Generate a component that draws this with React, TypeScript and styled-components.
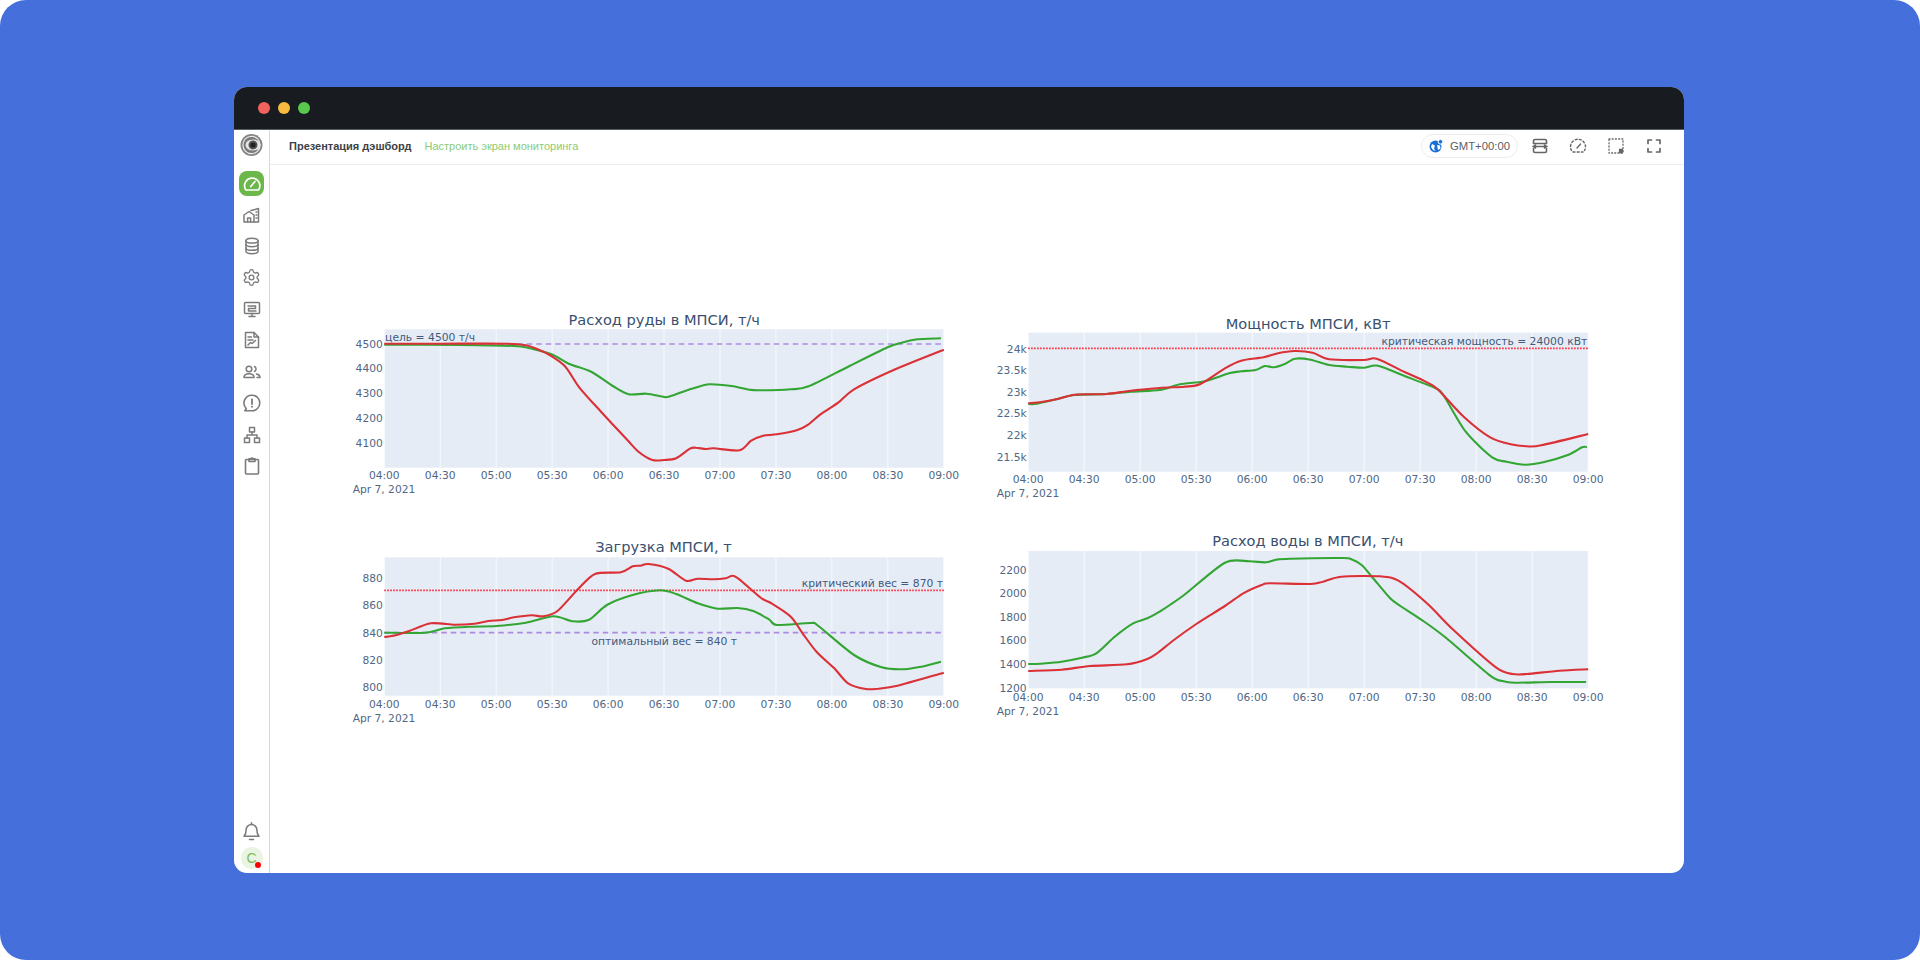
import React from 'react';
import styled, { createGlobalStyle } from 'styled-components';
import { Settings } from 'lucide-react';

const Global = createGlobalStyle`
  html, body { margin: 0; padding: 0; background: #fff; }
  #root { width: 1920px; height: 960px; overflow: hidden; }
`;

const Page = styled.div`
  width: 1920px; height: 960px; box-sizing: border-box;
  background: #4570db; border-radius: 26px;
  padding: 87px 0 0 234px;
  font-family: "Liberation Sans", Arial, sans-serif;
`;
const Window = styled.div`
  width: 1450px; height: 786px; border-radius: 13px; overflow: hidden;
  background: #fff; display: flex; flex-direction: column;
`;
const TitleBar = styled.div`
  height: 43px; flex: none; background: #181c20; display: flex; align-items: center;
  gap: 8px; padding-left: 24px; border-bottom: 1px solid #5a5d60; box-sizing: border-box;
`;
const Dot = styled.span<{ $c: string }>`
  width: 12px; height: 12px; border-radius: 50%; background: ${p => p.$c};
`;
const Body = styled.div`flex: 1; display: flex; min-height: 0;`;
const Sidebar = styled.aside`
  width: 36px; flex: none; box-sizing: border-box; border-right: 1.5px solid #d9d9d9;
  display: flex; flex-direction: column; align-items: center; padding: 3px 0 0 0;
`;
const Logo = styled.div`width: 24px; height: 24px; margin-bottom: 14px;`;
const NavList = styled.nav`display: flex; flex-direction: column; align-items: center; gap: 6.4px;`;
const NavItem = styled.div<{ $active?: boolean }>`
  width: 25px; height: 25px; border-radius: 8px; display: flex; align-items: center; justify-content: center;
  background: ${p => (p.$active ? '#6cb74a' : 'transparent')};
  color: ${p => (p.$active ? '#fff' : '#7b7b7b')};
`;
const SideBottom = styled.div`
  margin-top: auto; display: flex; flex-direction: column; align-items: center; gap: 5px; padding-bottom: 4px;
  color: #7b7b7b;
`;
const Avatar = styled.div`
  position: relative; width: 22px; height: 22px; border-radius: 50%; background: #e9f4e2;
  color: #7dbb5a; font-size: 14px; display: flex; align-items: center; justify-content: center;
`;
const RedDot = styled.span`
  position: absolute; right: 2px; bottom: 1px; width: 6px; height: 6px; border-radius: 50%; background: #f00;
`;
const Main = styled.main`flex: 1; min-width: 0; display: flex; flex-direction: column;`;
const Header = styled.header`
  height: 35px; flex: none; box-sizing: border-box; border-bottom: 1px solid #ebebeb;
  display: flex; align-items: center; padding: 0 20px 2px 19px;
`;
const Crumb = styled.span`font-size: 11px; font-weight: 700; color: #3b3f46; margin-right: 13px;`;
const Link = styled.span`font-size: 11px; color: #8ccc74;`;
const RightGroup = styled.div`margin-left: auto; display: flex; align-items: center; gap: 12px;`;
const Tools = styled.div`display: flex; align-items: center; gap: 18px; color: #666;`;
const Pill = styled.div`
  height: 24px; width: 97px; box-sizing: border-box; border: 1px solid #ececec; border-radius: 12px;
  display: flex; align-items: center; gap: 7px; padding-left: 7px;
  font-size: 11.3px; color: #5d6066;
`;
const ToolIcon = styled.div`width: 20px; height: 20px; display: flex; align-items: center; justify-content: center;`;
const Grid = styled.div`
  display: grid; grid-template-columns: 620px 640px; column-gap: 20px;
  padding: 135px 0 0 70px; align-items: start;
`;
const ChartBox = styled.svg<{ $top: number }>`
  display: block; overflow: visible; margin-top: ${p => p.$top}px;
`;
const Title = styled.text`font-family: "DejaVu Sans", sans-serif; font-size: 14.6px; fill: #3a4f6f; text-anchor: middle;`;
const Tick = styled.text`font-family: "DejaVu Sans", sans-serif; font-size: 10.7px; fill: #506784;`;
const Note = styled.text`font-family: "DejaVu Sans", sans-serif; font-size: 10.75px; fill: #445a7c;`;

type Pt = [number, number];
type Cfg = {
  w: number; h: number; s: number; top: number;
  plot: [number, number, number, number];
  title: string; titleAt: Pt;
  yTicks: [string, number][];
  xLabelY: number; dateAt: Pt;
  lines: { y: number; kind: 'dash' | 'dot' }[];
  notes: { t: string; x: number; y: number; anchor: 'start' | 'end' | 'middle' }[];
  red: Pt[]; green: Pt[];
};

const SY = 3;

const spline = (pts: Pt[], s: number) => {
  const p = pts.map(([x, y]) => [x / s, y / SY]);
  let d = `M${p[0][0].toFixed(1)} ${p[0][1].toFixed(1)}`;
  for (let i = 0; i < p.length - 1; i++) {
    const a = p[Math.max(i - 1, 0)], b = p[i], c = p[i + 1], e = p[Math.min(i + 2, p.length - 1)];
    const k = 0.14;
    d += `C${(b[0] + (c[0] - a[0]) * k).toFixed(1)} ${(b[1] + (c[1] - a[1]) * k).toFixed(1)} ${(c[0] - (e[0] - b[0]) * k).toFixed(1)} ${(c[1] - (e[1] - b[1]) * k).toFixed(1)} ${c[0].toFixed(1)} ${c[1].toFixed(1)}`;
  }
  return d;
};

const XT = ['04:00','04:30','05:00','05:30','06:00','06:30','07:00','07:30','08:00','08:30','09:00'];

const Chart: React.FC<{ c: Cfg }> = ({ c }) => {
  const s = c.s;
  const x0 = c.plot[0] / s, y0 = c.plot[1] / SY, x1 = c.plot[2] / s, y1 = c.plot[3] / SY;
  const step = (x1 - x0) / 10;
  return (
    <ChartBox $top={c.top} width={c.w} height={c.h} viewBox={`0 0 ${c.w} ${c.h}`}>
      <Title x={c.titleAt[0] / s} y={c.titleAt[1] / SY + 4.500}>{c.title}</Title>
      <rect x={x0} y={y0} width={x1 - x0} height={y1 - y0} fill="#e5ecf6" />
      {XT.map((_, i) => <line key={i} x1={x0 + i * step} x2={x0 + i * step} y1={y0} y2={y1} stroke="#fff" strokeOpacity={0.75} strokeWidth={1} />)}
      {c.lines.map((l, i) => (
        <line key={i} x1={x0} x2={x1} y1={l.y / SY} y2={l.y / SY}
          stroke={l.kind === 'dash' ? '#ac8ae2' : '#ff1f30'} strokeWidth={l.kind === 'dash' ? 1.6 : 1.8}
          strokeDasharray={l.kind === 'dash' ? '5.5 4' : '1.5 1.5'} />
      ))}
      <path d={spline(c.green, s)} fill="none" stroke="#33a533" strokeWidth={2.1} />
      <path d={spline(c.red, s)} fill="none" stroke="#da3036" strokeWidth={2.1} />
      {c.yTicks.map(([t, y]) => <Tick key={t} x={x0 - 1.5} y={y / SY + 3.8} textAnchor="end">{t}</Tick>)}
      {XT.map((t, i) => <Tick key={t} x={x0 + i * step} y={c.xLabelY / SY + 3.8} textAnchor="middle">{t}</Tick>)}
      <Tick x={c.dateAt[0] / s} y={c.dateAt[1] / SY + 3.300}>Apr 7, 2021</Tick>
      {c.notes.map(n => <Note key={n.t} x={n.x / s} y={n.y / SY + 3.6} textAnchor={n.anchor}>{n.t}</Note>)}
    </ChartBox>
  );
};

const charts: Cfg[] = [
  {
    w: 620, h: 210, s: 2.529, top: 0, plot: [112, 88, 1527, 503],
    title: 'Расход руды в МПСИ, т/ч', titleAt: [820, 60],
    yTicks: [['4500',132],['4400',206],['4300',281],['4200',355],['4100',429]],
    xLabelY: 525, dateAt: [32, 570],
    lines: [{ y: 132, kind: 'dash' }],
    notes: [{ t: 'цель = 4500 т/ч', x: 114, y: 111, anchor: 'start' }],
    red: [[112,131],[250,131],[420,131],[470,136],[500,148],[530,165],[570,200],[605,262],[660,335],[725,418],[755,455],[790,480],[820,480],[850,475],[885,446],[900,443],[925,447],[945,445],[1010,451],[1040,422],[1070,407],[1105,403],[1155,391],[1185,373],[1215,343],[1260,308],[1300,268],[1400,210],[1527,149]],
    green: [[112,134],[300,135],[440,138],[480,145],[535,163],[580,192],[635,215],[690,258],[730,283],[775,281],[820,291],[835,289],[890,266],[935,253],[990,258],[1035,269],[1060,271],[1140,268],[1185,259],[1290,197],[1385,142],[1420,128],[1460,118],[1520,115]],
  },
  {
    w: 640, h: 210, s: 2.45, top: 0, plot: [118, 98, 1490, 515],
    title: 'Мощность МПСИ, кВт', titleAt: [804, 72],
    yTicks: [['24k',147],['23.5k',211],['23k',276],['22.5k',341],['22k',406],['21.5k',471]],
    xLabelY: 537, dateAt: [41, 580],
    lines: [{ y: 145, kind: 'dot' }],
    notes: [{ t: 'критическая мощность = 24000 кВт', x: 1488, y: 123, anchor: 'end' }],
    red: [[118,310],[150,306],[190,297],[232,284],[310,282],[370,272],[440,264],[500,260],[540,252],[600,205],[640,182],[695,172],[730,160],[770,153],[815,158],[855,178],[940,180],[972,176],[1040,216],[1080,238],[1120,266],[1185,350],[1250,412],[1300,433],[1340,439],[1375,436],[1490,402]],
    green: [[118,312],[140,311],[190,297],[232,285],[310,282],[370,275],[440,270],[490,253],[550,244],[610,220],[640,214],[675,210],[698,198],[720,202],[745,193],[772,176],[810,179],[855,195],[900,200],[940,203],[975,197],[1040,228],[1115,264],[1135,285],[1190,395],[1255,472],[1290,485],[1335,494],[1380,487],[1440,465],[1475,442],[1487,441]],
  },
  {
    w: 620, h: 200, s: 2.529, top: 20, plot: [112, 82, 1527, 497],
    title: 'Загрузка МПСИ, т', titleAt: [818, 53],
    yTicks: [['880',145],['860',227],['840',309],['820',391],['800',473]],
    xLabelY: 522, dateAt: [32, 565],
    lines: [{ y: 181, kind: 'dot' }, { y: 308, kind: 'dash' }],
    notes: [
      { t: 'критический вес = 870 т', x: 1525, y: 160, anchor: 'end' },
      { t: 'оптимальный вес = 840 т', x: 636, y: 333, anchor: 'start' },
    ],
    red: [[112,321],[140,316],[175,303],[230,280],[290,284],[340,281],[375,273],[410,270],[440,262],[485,256],[515,259],[550,243],[600,180],[645,132],[710,127],[740,109],[760,107],[780,102],[830,116],[875,152],[905,146],[945,148],[975,145],[993,137],[1010,148],[1065,204],[1090,219],[1140,260],[1170,310],[1205,365],[1250,415],[1285,460],[1330,477],[1360,476],[1410,467],[1527,428]],
    green: [[112,308],[215,308],[265,295],[330,290],[395,288],[470,278],[540,259],[590,274],[630,269],[675,225],[740,195],[810,181],[850,192],[905,220],[955,236],[1005,234],[1045,243],[1085,268],[1105,285],[1190,279],[1210,288],[1300,375],[1370,412],[1420,418],[1470,410],[1520,395]],
  },
  {
    w: 640, h: 200, s: 2.45, top: 15, plot: [118, 78, 1490, 490],
    title: 'Расход воды в МПСИ, т/ч', titleAt: [803, 50],
    yTicks: [['2200',135],['2000',206],['1800',276],['1600',347],['1400',418],['1200',489]],
    xLabelY: 518, dateAt: [41, 561],
    lines: [],
    notes: [],
    red: [[118,438],[200,434],[270,423],[360,418],[410,402],[435,384],[475,345],[530,297],[600,243],[645,205],[690,180],[710,175],[810,177],[840,170],[885,155],[980,154],[1025,167],[1095,235],[1160,315],[1265,428],[1305,447],[1340,447],[1420,437],[1490,433]],
    green: [[118,417],[150,416],[200,410],[250,398],[285,385],[330,335],[375,295],[410,280],[440,260],[500,210],[600,113],[660,109],[700,112],[725,104],[760,101],[890,99],[910,103],[935,120],[960,155],[1005,220],[1030,243],[1080,283],[1140,337],[1250,452],[1280,468],[1310,473],[1400,471],[1485,471]],
  },
];

const Ico: React.FC<{ children: React.ReactNode; size?: number; sw?: number }> = ({ children, size = 20, sw = 1.4 }) => (
  <svg width={size} height={size} viewBox="0 0 20 20" fill="none" stroke="currentColor" strokeWidth={sw} strokeLinecap="round" strokeLinejoin="round">{children}</svg>
);

const nav: React.ReactNode[] = [
  <Ico size={20} sw={1.7}><path d="M3.600 15.500A7.600 7.600 0 1 1 16.800 15.500a1 1 0 0 1-.9.5H4.500a1 1 0 0 1-.9-.5Z" /><path d="M8.700 12.500 13 7.500" /></Ico>,
  <Ico sw={1.5}><path d="M2 17V10l5-3.500 5 3.500v7H2Z" /><path d="M5.600 17v-4h3v4" /><path d="M9 5.500 16.500 3.500V17H12" /><path d="M14 7h1M14 10h1M14 13h1" /></Ico>,
  <Ico sw={1.5}><ellipse cx="10" cy="4.700" rx="6" ry="2.400" /><path d="M4 4.700v10.600c0 1.300 2.700 2.400 6 2.400s6-1.100 6-2.400V4.700" /><path d="M4 8.300c0 1.300 2.700 2.400 6 2.400s6-1.100 6-2.400M4 11.900c0 1.300 2.700 2.400 6 2.400s6-1.100 6-2.400" /></Ico>,
  <Settings size={19} strokeWidth={1.7} />,
  <Ico sw={1.5}><rect x="2.500" y="3.500" width="15" height="11" rx="1" /><path d="M6 7h7.500v2.500H6.500V12H14M10 14.500v2.500M7 17.500h6" /></Ico>,
  <Ico sw={1.5}><path d="M3.500 2.500h8.500l4.500 4.500v10.500h-13V2.500Z" /><path d="M12 2.500V7h4.500M6 7h3.500M6 10h5M6 15l2.500-2.500 1.500 1 3.500-3" /></Ico>,
  <Ico sw={1.5}><circle cx="7" cy="7" r="2.800" /><path d="M2 15.500c0-2.500 2.200-3.800 5-3.800s5 1.300 5 3.800H2Z" /><path d="M12.500 4.500a2.800 2.800 0 0 1 0 5M14.500 12c1.800.4 3.500 1.400 3.500 3.500h-3" /></Ico>,
  <Ico sw={1.6}><path d="M10 2.200a7.800 7.800 0 0 1 0 15.600H2.800l1.500-2.300A7.800 7.800 0 0 1 10 2.200Z" /><path d="M10 6.300v4.700" strokeWidth={1.800} /><path d="M10 13.700v.1" strokeWidth={2} /></Ico>,
  <Ico sw={1.5}><rect x="7.500" y="2.500" width="5" height="4.500" /><rect x="2.500" y="13" width="5" height="4.500" /><rect x="12.500" y="13" width="5" height="4.500" /><path d="M10 7v3M5 13v-3h10v3" /></Ico>,
  <Ico sw={1.6}><rect x="3.500" y="3.500" width="13" height="14.500" rx="1" /><path d="M7 5.500V2.800h1.800a1.300 1.300 0 0 1 2.400 0H13v2.700H7Z" /></Ico>,
];

export default function App() {
  return (
    <Page>
      <Global />
      <Window>
        <TitleBar>
          <Dot $c="#f0625b" /><Dot $c="#f7bb42" /><Dot $c="#5ac84e" />
        </TitleBar>
        <Body>
          <Sidebar>
            <Logo>
              <svg width="24" height="24" viewBox="0 0 24 24" fill="none">
                <circle cx="11.500" cy="12" r="11" fill="#858585" />
                <circle cx="11.500" cy="12" r="9.200" fill="#e8e8e8" />
                <circle cx="11.500" cy="12" r="8" fill="#7a7a7a" />
                <ellipse cx="13" cy="12" rx="7.500" ry="5.500" fill="#e6e6e6" />
                <circle cx="13" cy="12" r="4.500" fill="#555" />
                <circle cx="13" cy="12" r="2.600" fill="#222" />
              </svg>
            </Logo>
            <NavList>
              {nav.map((n, i) => <NavItem key={i} $active={i === 0}>{n}</NavItem>)}
            </NavList>
            <SideBottom>
              <Ico size={23} sw={1.35}><path d="M3.500 15c1.200-1.300 1.800-2.700 1.800-5.500a4.700 4.700 0 0 1 9.400 0c0 2.800.6 4.200 1.800 5.500H3.500Z" /><path d="M10 4.800V3.300M8.300 17.800h3.400" /></Ico>
              <Avatar>C<RedDot /></Avatar>
            </SideBottom>
          </Sidebar>
          <Main>
            <Header>
              <Crumb>Презентация дэшборд</Crumb>
              <Link>Настроить экран мониторинга</Link>
              <RightGroup>
                <Pill>
                  <svg width="14" height="14" viewBox="0 0 14 14"><circle cx="6.500" cy="7.500" r="6" fill="#1a6fd8" /><circle cx="11.500" cy="2.800" r="2.300" fill="#1a6fd8" stroke="#fff" /><path d="M3 5l3 1.500-1 3L6.500 12 4 11 2 8ZM8 6l3 .5.5 3L9 11Z" fill="#fff" /></svg>
                  GMT+00:00
                </Pill>
                <Tools>
                  <ToolIcon><Ico sw={1.6}><path d="M3.500 7.500V5A1.500 1.500 0 0 1 5 3.500h10A1.500 1.500 0 0 1 16.500 5v2.500H3.500ZM3.500 12.500V15A1.500 1.500 0 0 0 5 16.500h10a1.500 1.500 0 0 0 1.500-1.500v-2.500" /><path d="M3 10.500h14M5.500 9 3.500 10.500 5.500 12M14.500 9l2 1.500-2 1.500" /></Ico></ToolIcon>
                  <ToolIcon><Ico sw={1.4}><path d="M3.500 14.500A7.500 7.500 0 1 1 16.500 14.500" strokeDasharray="2 2.200" /><path d="M5 16h10" strokeDasharray="2 2.200" /><path d="M9 12l3.500-4" /></Ico></ToolIcon>
                  <ToolIcon><Ico sw={1.3}><rect x="3" y="3" width="14" height="14" strokeDasharray="1 2.200" /><path d="M13.500 13.500h3v3h-3Z" fill="currentColor" /></Ico></ToolIcon>
                  <ToolIcon><Ico sw={1.7}><path d="M4 7.500V4h3.500M12.500 4H16v3.500M16 12.500V16h-3.500M7.500 16H4v-3.500" /></Ico></ToolIcon>
                </Tools>
              </RightGroup>
            </Header>
            <Grid>
              {charts.map(c => <Chart key={c.title} c={c} />)}
            </Grid>
          </Main>
        </Body>
      </Window>
    </Page>
  );
}
